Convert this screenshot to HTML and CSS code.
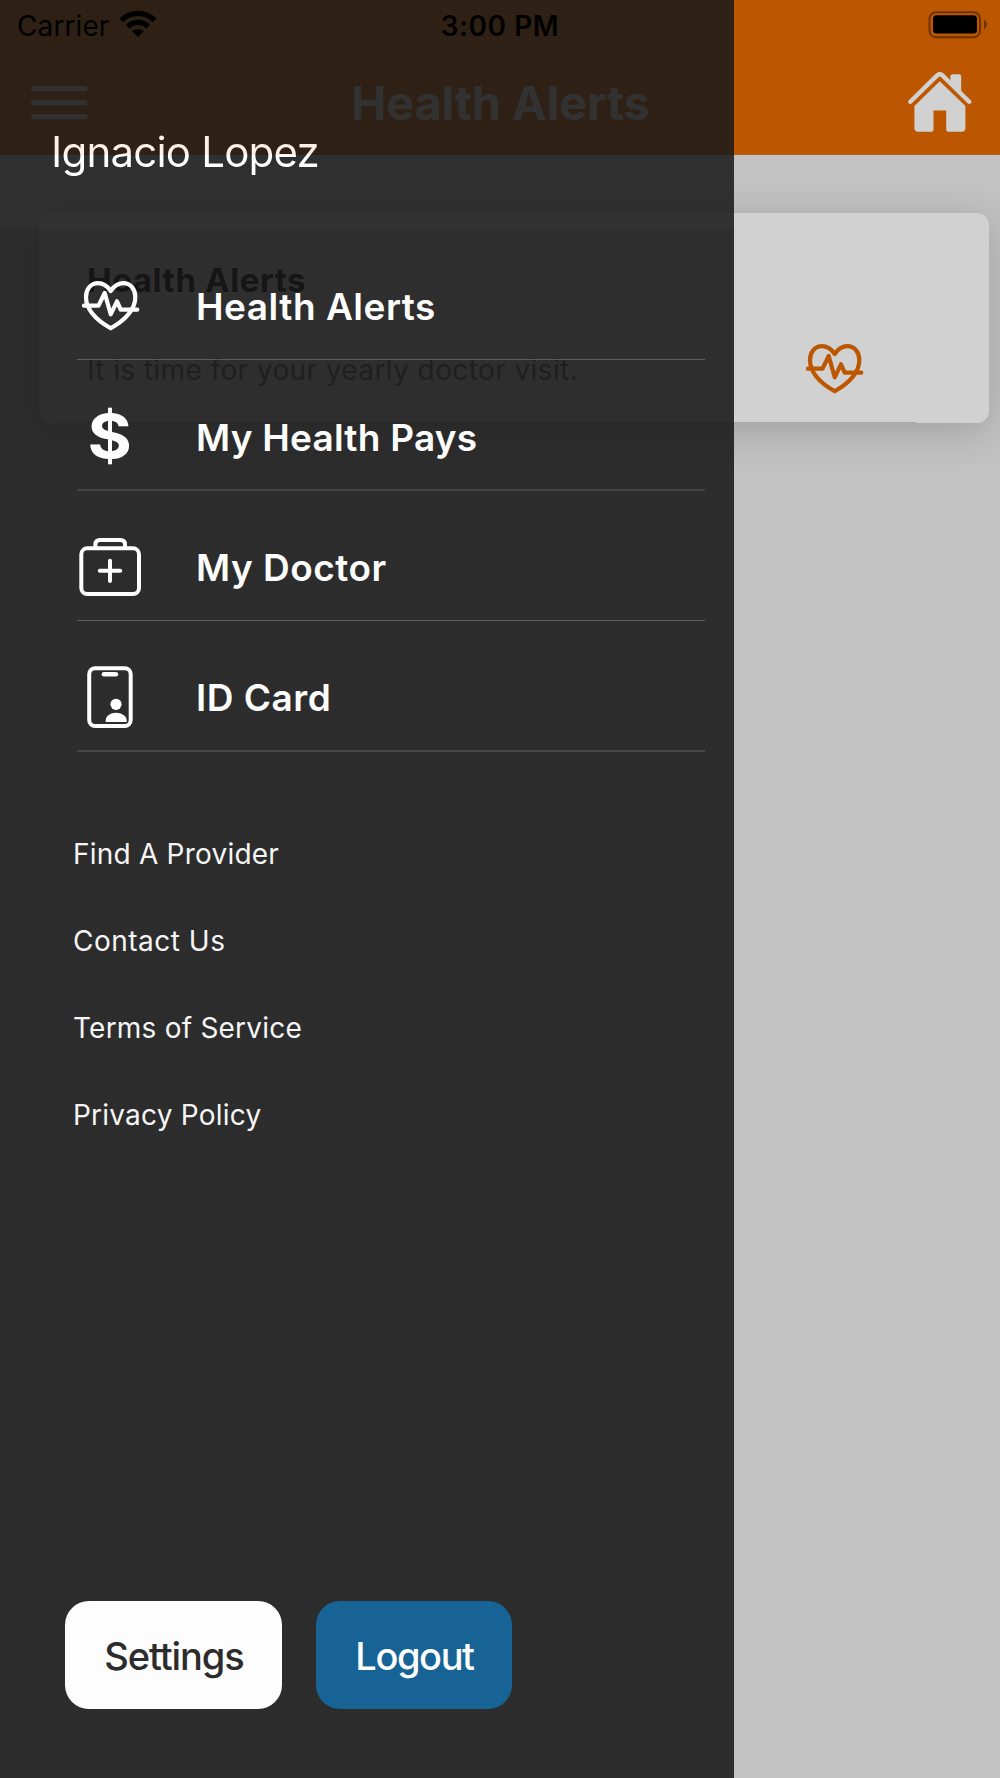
FILE: index.html
```html
<!DOCTYPE html>
<html lang="en">
<head>
<meta charset="utf-8">
<title>Health Alerts</title>
<link rel="stylesheet" href="styles.css">
</head>
<body>
<svg class="symbols" width="0" height="0" aria-hidden="true">
  <symbol id="heart" viewBox="0 0 58 50">
    <g fill="none" stroke="currentColor" stroke-width="4.2" stroke-linecap="round" stroke-linejoin="round">
      <path d="M28.7 10C25.2 4.8 20.8 2.2 15.9 2.2C8.8 2.2 4 8.3 4 16C4 28 13 38.3 28.7 47.3C44.4 38.3 53.3 28 53.3 16C53.3 8.3 48.5 2.2 41.4 2.2C36.6 2.2 32.2 4.8 28.7 10Z"/>
      <path d="M2 24.7H16.5L22.7 12L28.7 33.3L35 20.3L38.7 28.7H55.3"/>
    </g>
  </symbol>
</svg>

<div class="screen">
  <header class="header">
    <svg class="burger" viewBox="0 0 57 34"><path d="M2.5 2.7H54M2.5 16.8H54M2.5 30.7H54" stroke="currentColor" stroke-width="5" stroke-linecap="round"/></svg>
    <h1 class="header-title">Health Alerts</h1>
    <svg class="home" viewBox="0 0 64 60">
      <path d="M2.3 29.8L29.2 3.4Q31.8.9 34.4 3.4L61.2 29.8" fill="none" stroke="currentColor" stroke-width="4.4" stroke-linecap="round"/>
      <path d="M42.4 9V4.500Q42.400 2.300 44.600 2.300H51Q53.200 2.300 53.200 4.500V20L42.400 9.300Z" fill="currentColor"/>
      <path d="M31.800 9.300L57.400 34V56Q57.400 59.800 53.600 59.800H40.500Q38.200 59.800 38.200 57.500V38.500H25.500V57.500Q25.500 59.800 23.200 59.800H10.200Q6.400 59.800 6.400 56V34Z" fill="currentColor"/>
    </svg>
  </header>

  <main class="content">
    <article class="card">
      <div class="card-text">
        <h2 class="card-title">Health Alerts</h2>
        <p class="card-desc">It is time for your yearly doctor visit.</p>
      </div>
      <svg class="heart card-heart"><use href="#heart"/></svg>
    </article>
  </main>

  <aside class="drawer">
    <div class="user"><span class="user-name">Ignacio Lopez</span></div>
    <nav class="menu">
      <a class="item"><span class="icon"><svg class="heart"><use href="#heart"/></svg></span><span class="label">Health Alerts</span></a>
      <a class="item"><span class="icon"><span class="dollar">$</span></span><span class="label tight">My Health Pays</span></a>
      <a class="item"><span class="icon bag"><svg width="62" height="60" viewBox="0 0 62 60" fill="none" stroke="currentColor" stroke-width="4" stroke-linecap="round"><rect x="2.300" y="11.300" width="57.700" height="45.800" rx="6"/><path d="M16.400 11V7.500Q16.400 3 21 3H41.500Q46 3 46 7.500V11M31 23.700V44M20.800 33.800H41.200"/></svg></span><span class="label">My Doctor</span></a>
      <a class="item"><span class="icon"><svg width="46" height="62" viewBox="0 0 46 62"><rect x="2.200" y="2.200" width="41.500" height="57.800" rx="6" fill="none" stroke="currentColor" stroke-width="4"/><rect x="14.600" y="6" width="16.600" height="4.600" rx="2.300" fill="currentColor"/><circle cx="29" cy="38.300" r="5.600" fill="currentColor"/><path d="M18.700 56V54.500C18.700 50 23.500 46.800 29 46.800S39.700 50 39.700 54.500V56Z" fill="currentColor"/></svg></span><span class="label">ID Card</span></a>
    </nav>
    <nav class="links">
      <a>Find A Provider</a>
      <a class="wide">Contact Us</a>
      <a>Terms of Service</a>
      <a>Privacy Policy</a>
    </nav>
    <div class="actions">
      <button class="btn settings">Settings</button>
      <button class="btn logout">Logout</button>
    </div>
  </aside>

  <div class="status">
    <div class="status-left">
      <span class="carrier">Carrier</span>
      <svg class="wifi" viewBox="0 0 38 28">
        <g fill="none" stroke="#000" stroke-width="5.200"><path d="M2.400 10.400C11.600 1.100 26.400 1.100 35.600 10.400"/><path d="M8.700 16.600C14.500 10.900 23.500 10.900 29.300 16.600"/></g>
        <path d="M19 27.200L13.300 21.300C16.600 18.300 21.400 18.300 24.700 21.300Z"/>
      </svg>
    </div>
    <span class="time">3:00 PM</span>
    <svg class="battery" viewBox="0 0 60 28">
      <rect x="1.500" y="1.300" width="50.500" height="25" rx="6.500" fill="none" stroke="#6e3300" stroke-width="2"/>
      <rect x="5" y="4.300" width="44" height="18.300" rx="3.500"/>
      <path d="M56 8.500Q59 10.500 59 13.500T56 18.500Z" fill="#6e3300"/>
    </svg>
  </div>
</div>
</body>
</html>
```
FILE: styles.css
```css
* { box-sizing: border-box; margin: 0; padding: 0; }
body { font-family: Inter, "Liberation Sans", sans-serif; background: #c2c2c2; }
.symbols { display: block; position: absolute; }
.screen { position: relative; width: 1000px; height: 1778px; overflow: hidden; background: #c2c2c2; }
svg { display: block; flex: none; }

/* page under the drawer */
.header {
  height: 155px; padding: 51px 28px 0 31px; display: flex; justify-content: space-between;
  background: #bc5600; border-bottom: 1px solid #b2611f; color: #d1d1d1;
}
.burger { width: 57px; height: 34px; margin-top: 35px; }
.header-title { font-size: 47px; line-height: 60px; font-weight: 700; margin-top: 22px; margin-left: 5px; white-space: nowrap; letter-spacing: -.2px; }
.home { width: 64px; height: 60px; margin-top: 21px; }
.content { padding: 58px 11px 0 39px; }
.card {
  height: 210px; border-radius: 12px; background: #d1d1d1; display: flex; justify-content: space-between;
  padding: 43px 125px 0 48px; box-shadow: 0 8px 40px rgba(0, 0, 0, .18);
  background-image: linear-gradient(#a8a8a8, #a8a8a8); background-size: 828px 1px;
  background-position: 49px 100%; background-repeat: no-repeat;
}
.card-title { font-size: 33px; line-height: 48px; font-weight: 700; color: #080808; white-space: nowrap; letter-spacing: .6px; }
.card-desc { font-size: 28px; line-height: 40px; margin-top: 46px; color: #585858; white-space: nowrap; letter-spacing: .4px; }
.heart { width: 58px; height: 50px; }
.card-heart { color: #bc5600; margin-top: 88px; }

/* drawer */
.drawer {
  position: absolute; left: 0; top: 0; width: 734px; height: 1778px; color: #fdfdfd;
  display: flex; flex-direction: column;
  background: linear-gradient(rgba(24, 24, 24, .861) 230px, rgba(23, 23, 23, .876) 230px);
}
.user { height: 230px; padding: 122px 0 0 51px; }
.user-name {
  display: inline-block; font-size: 42px; line-height: 60px; letter-spacing: -.8px; white-space: nowrap;
  background: linear-gradient(#fff0e6 33px, #fff 33px); -webkit-background-clip: text; background-clip: text; color: transparent;
}
.menu { padding: 0 29px 0 77px; }
.item { height: 130px; display: flex; align-items: flex-end; border-bottom: 1px solid #5c5c5c; }
.item:nth-child(even) { height: 131px; border-bottom: 2px solid #444; }
.icon { width: 66px; display: flex; justify-content: center; margin-right: 53px; padding-bottom: 22px; }
.item:first-child .icon { padding-bottom: 28px; padding-left: 1px; }
.icon.bag { padding-bottom: 23px; }
.dollar { font-size: 60px; line-height: 60px; font-weight: 700; margin-bottom: 1px; transform: scaleX(1.13); }
.label { font-size: 37px; line-height: 50px; font-weight: 600; margin-bottom: 27px; white-space: nowrap; letter-spacing: .5px; }
.item:nth-child(2) .label { margin-bottom: 26px; }
.label.tight { letter-spacing: .22px; }
.links { display: flex; flex-direction: column; gap: 47px; padding: 82px 0 0 73px; color: #f5f5f5; font-size: 28px; line-height: 40px; letter-spacing: .22px; white-space: nowrap; }
.links .wide { letter-spacing: .5px; }
.actions { margin-top: auto; padding: 0 0 69px 65px; display: flex; gap: 34px; }
.btn { border: 0; border-radius: 24px; height: 108px; padding-left: 1px; font: 500 38px/110px Inter, "Liberation Sans", sans-serif; letter-spacing: -1.1px; }
.settings { width: 217px; background: #fdfdfd; color: #2c2c2c; }
.logout { width: 196px; background: #176396; color: #fdfdfd; letter-spacing: -1.4px; }

/* status bar, above everything */
.status { position: absolute; left: 0; top: 0; width: 1000px; height: 52px; display: grid; grid-template-columns: 1fr auto 1fr; padding: 0 12px; color: #000; font-size: 28px; line-height: 52px; }
.status-left { display: flex; gap: 10px; padding-left: 5px; letter-spacing: .1px; }
.wifi { width: 38px; height: 28px; margin-top: 10px; }
.time { font-weight: 600; letter-spacing: .55px; }
.battery { width: 60px; height: 28px; margin-top: 11px; justify-self: end; }
```
